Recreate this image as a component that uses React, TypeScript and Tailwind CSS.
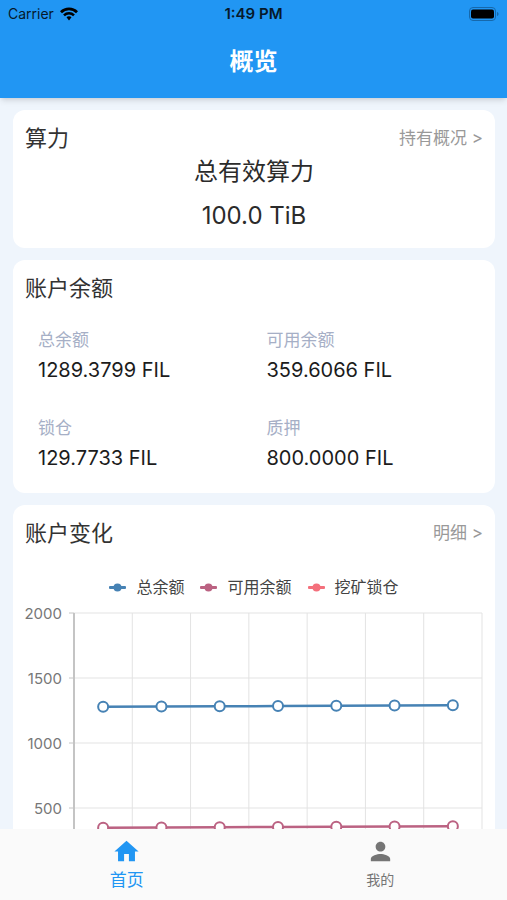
import type { ReactNode } from "react";
import { MdHome, MdPerson } from "react-icons/md";

const balances = [
  { label: "总余额", value: "1289.3799 FIL" },
  { label: "可用余额", value: "359.6066 FIL" },
  { label: "锁仓", value: "129.7733 FIL" },
  { label: "质押", value: "800.0000 FIL" },
];

const legend = [
  { name: "总余额", color: "#4682b4" },
  { name: "可用余额", color: "#bb6282" },
  { name: "挖矿锁仓", color: "#f4707c" },
];

const series = [
  { color: "#4682b4", values: [1279, 1281, 1282, 1284, 1286, 1288, 1290] },
  { color: "#bb6282", values: [348, 350, 352, 354, 355, 357, 359] },
];

const ticks = [2000, 1500, 1000, 500];

// plot area, in viewBox units
const LEFT = 61;
const RIGHT = 469;
const TOP = 14;
const STEP = 65;
const COL = (RIGHT - LEFT) / 7;

const yOf = (value: number) => TOP + ((2000 - value) / 500) * STEP;
const xOf = (i: number) => LEFT + COL * (i + 0.5);

function StatusBar() {
  return (
    <div className="grid h-7 grid-cols-3 items-center px-2 text-sm text-[#06192b]">
      <div className="flex items-center gap-1.5">
        <span>Carrier</span>
        <svg viewBox="0 0 18 14" className="h-3.5 w-[18px]" fill="none" aria-hidden="true">
          <path d="M1 5.2a11.4 11.4 0 0 1 16 0" stroke="#000" strokeWidth="2.8" />
          <path d="M4 8.4a7.1 7.1 0 0 1 10 0" stroke="#000" strokeWidth="2.5" />
          <path d="M9 9.3c1 0 1.900.4 2.500 1L9 13.400l-2.500-3.100c.6-.6 1.500-1 2.500-1Z" fill="#000" />
        </svg>
      </div>
      <span className="text-center text-[15px] font-semibold">1:49 PM</span>
      <svg viewBox="0 0 30 14" className="h-3.5 w-[30px] justify-self-end" aria-hidden="true">
        <rect x="0.5" y="0.5" width="26" height="13" rx="3.5" fill="none" stroke="#1668ab" />
        <rect x="2" y="2.5" width="23" height="9" rx="2" fill="#000" />
        <path d="M28 5c1 .3 1.500 1 1.500 2s-.5 1.700-1.500 2Z" fill="#1668ab" />
      </svg>
    </div>
  );
}

function Card({
  title,
  link,
  children,
}: {
  title: string;
  link?: string;
  children: ReactNode;
}) {
  return (
    <section className="rounded-xl bg-white">
      <div className="flex items-center justify-between px-3 pt-3">
        <h2 className="text-[22px] leading-8 text-[#333]">{title}</h2>
        {link && (
          <a href="#" className="text-[17px] leading-8 text-[#999]">
            {link} &gt;
          </a>
        )}
      </div>
      {children}
    </section>
  );
}

function BalanceChart() {
  return (
    <svg viewBox="0 0 482 290" className="block w-full" role="img" aria-label="账户变化">
      {ticks.map((tick) => (
        <g key={tick}>
          <line x1={LEFT} x2={RIGHT} y1={yOf(tick)} y2={yOf(tick)} stroke="#e3e3e3" />
          <line x1={LEFT - 5} x2={LEFT} y1={yOf(tick)} y2={yOf(tick)} stroke="#c4c4c4" />
          <text
            x={LEFT - 12}
            y={yOf(tick)}
            textAnchor="end"
            dominantBaseline="central"
            className="fill-[#777] text-[15px]"
          >
            {tick}
          </text>
        </g>
      ))}
      {Array.from({ length: 7 }, (_, i) => (
        <line
          key={i}
          x1={LEFT + COL * (i + 1)}
          x2={LEFT + COL * (i + 1)}
          y1={TOP}
          y2={yOf(0)}
          stroke="#e3e3e3"
        />
      ))}
      <line x1={LEFT} x2={LEFT} y1={TOP} y2={yOf(0)} stroke="#c4c4c4" strokeWidth="2" />

      {series.map(({ color, values }) => (
        <g key={color} stroke={color}>
          <polyline
            points={values.map((v, i) => `${xOf(i)},${yOf(v)}`).join(" ")}
            fill="none"
            strokeWidth="2.5"
          />
          {values.map((v, i) => (
            <circle key={i} cx={xOf(i)} cy={yOf(v)} r="5" fill="#fff" strokeWidth="2" />
          ))}
        </g>
      ))}
    </svg>
  );
}

export default function App() {
  return (
    <div className="flex h-screen flex-col bg-[#eff5fc] font-['Inter','Noto_Sans_CJK_SC',sans-serif]">
      <header className="relative z-10 shrink-0 bg-[#2196f3] shadow-md">
        <StatusBar />
        <h1 className="pt-4 pb-[18px] text-center text-2xl leading-9 font-semibold text-white">
          概览
        </h1>
      </header>

      <main className="flex min-h-0 flex-1 flex-col gap-3 overflow-y-auto pt-3 pr-3 pl-[13px] [scrollbar-width:none]">
        <Card title="算力" link="持有概况">
          <div className="pt-0.5 pb-3 text-center text-2xl text-[#2b2b2b]">
            <p className="leading-8">总有效算力</p>
            <p className="pt-2 leading-10">100.0 TiB</p>
          </div>
        </Card>

        <Card title="账户余额">
          <dl className="grid grid-cols-2 gap-y-7 pt-[22px] pb-[19px] pl-[25px]">
            {balances.map(({ label, value }) => (
              <div key={label}>
                <dt className="text-[17px] leading-7 text-[#a6afc6]">{label}</dt>
                <dd className="text-xl leading-8 text-[#1c1c1c]">{value}</dd>
              </div>
            ))}
          </dl>
        </Card>

        <Card title="账户变化" link="明细">
          <ul className="flex justify-center gap-4 pt-[26px] text-base leading-6 text-[#444]">
            {legend.map(({ name, color }) => (
              <li key={name} className="flex items-center gap-2.5">
                <svg viewBox="0 0 17 9" className="h-[9px] w-[17px]" fill={color} aria-hidden="true">
                  <rect y="3" width="17" height="3" rx="1" />
                  <circle cx="8.5" cy="4.500" r="4" />
                </svg>
                {name}
              </li>
            ))}
          </ul>
          <BalanceChart />
        </Card>
      </main>

      <nav className="grid shrink-0 grid-cols-2 bg-[#fafafa] pt-2 pb-1.5">
        <a href="#" className="flex flex-col items-center text-[#2196f3]" aria-current="page">
          <MdHome size={29} />
          <span className="text-[17px] leading-7">首页</span>
        </a>
        <a href="#" className="flex flex-col items-center text-[#757575]">
          <MdPerson size={29} />
          <span className="text-sm leading-7">我的</span>
        </a>
      </nav>
    </div>
  );
}
